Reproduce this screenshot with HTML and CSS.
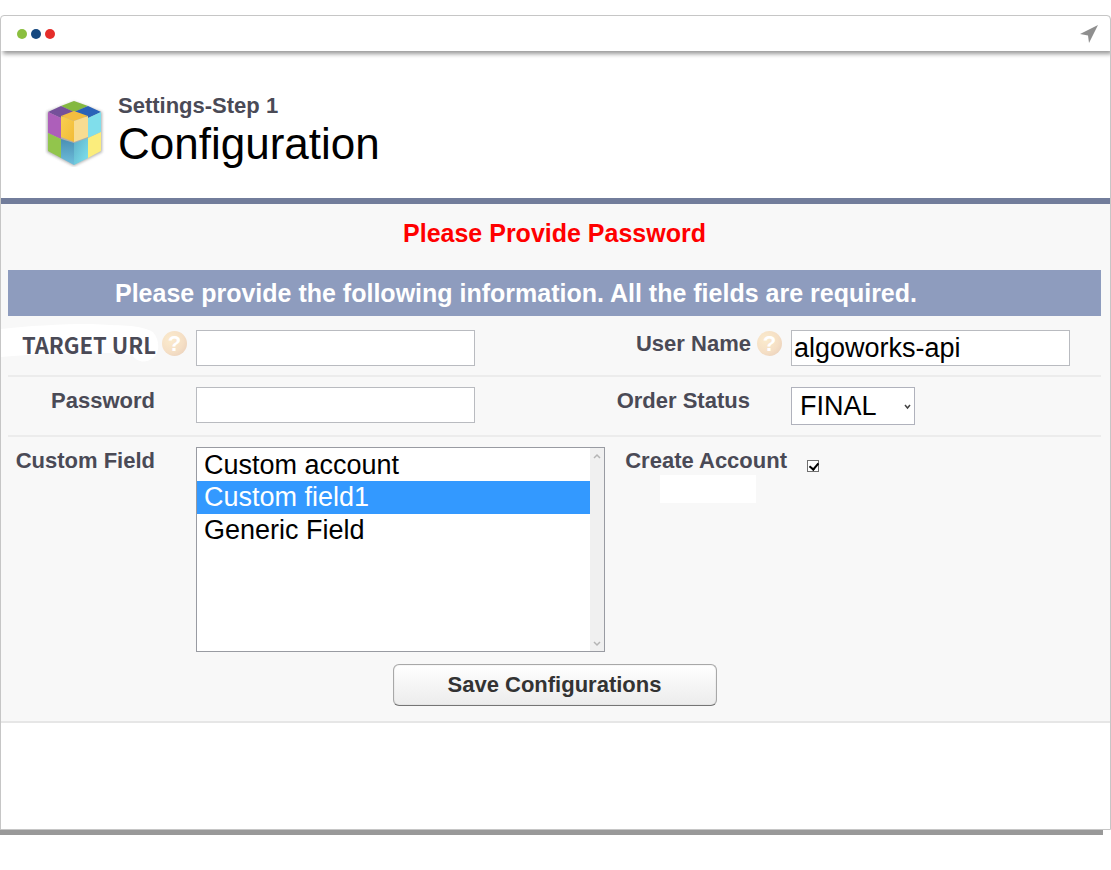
FILE: index.html
```
<!DOCTYPE html>
<html lang="en">
<head>
    <meta charset="UTF-8">
    <meta name="viewport" content="width=device-width, initial-scale=1.0">
    <title>Settings - Configuration</title>
    <link rel="stylesheet" href="styles.css">
</head>
<body>
    <div class="window">
        <div class="titlebar">
            <div class="dots">
                <span class="dot green"></span>
                <span class="dot blue"></span>
                <span class="dot red"></span>
            </div>
            <svg class="arrow" width="18" height="18" viewBox="0 0 18 18">
                <path d="M18 0L0 9l8 1.500L9 18z" fill="#8f8f8f"/>
            </svg>
        </div>

        <header class="header">
            <svg class="logo" width="60" height="68" viewBox="0 0 60 68">
                <defs>
                    <filter id="soft" x="-10%" y="-10%" width="120%" height="120%">
                        <feGaussianBlur stdDeviation="1.5"/>
                    </filter>
                    <linearGradient id="yellowLeft" x1="0" y1="0" x2="1" y2="1">
                        <stop offset="0" stop-color="#f8cf50"/>
                        <stop offset="1" stop-color="#f2bb38"/>
                    </linearGradient>
                    <linearGradient id="tealLeft" x1="0" y1="0" x2="0" y2="1">
                        <stop offset="0" stop-color="#4a8fb4"/>
                        <stop offset="1" stop-color="#6fbfdc"/>
                    </linearGradient>
                    <linearGradient id="tealRight" x1="0" y1="0" x2="1" y2="1">
                        <stop offset="0" stop-color="#5fb0c8"/>
                        <stop offset="1" stop-color="#80e4f0"/>
                    </linearGradient>
                </defs>
                <path d="M2 13L29 3l28 10v40L29 67 2 53z" fill="#777" opacity=".6" filter="url(#soft)"/>
                <path d="M29 2l14 5-14 6-13-6z" fill="#84b840"/>
                <path d="M16 7l13 6-13 6L3 13z" fill="#75509a"/>
                <path d="M43 7l13 6-13 6-14-6z" fill="#2a62b8"/>
                <path d="M3 13l13 6v21L3 34z" fill="#ad5fba"/>
                <path d="M56 13l-13 6v20l13-6z" fill="#80deeb"/>
                <path d="M3 34l13 6v19L3 52z" fill="#92c54c"/>
                <path d="M56 33l-13 6v20l13-7z" fill="#fbed7c"/>
                <path d="M16 40l13 4v22l-13-7z" fill="url(#tealLeft)"/>
                <path d="M43 39l-14 5v22l14-7z" fill="url(#tealRight)"/>
                <path d="M16 17l13-5 14 5-14 5z" fill="#f3bd40"/>
                <path d="M16 17l13 5v21l-13-5z" fill="url(#yellowLeft)"/>
                <path d="M43 17l-14 5v21l14-5z" fill="#f8dc91"/>
            </svg>
            <div>
                <div class="step">Settings-Step 1</div>
                <h1>Configuration</h1>
            </div>
        </header>

        <form class="settings">
            <p class="error">Please Provide Password</p>
            <h2 class="banner">Please provide the following information. All the fields are required.</h2>

            <div class="row">
                <div class="label">
                    <svg class="smudge" width="160" height="42" viewBox="0 0 160 42">
                        <path d="M0 7C25 4 60 2 90 2c28 2 48 0 62 8 7 8 7 21 0 26-8 6-16 4-21-3-30-4-80-2-131 2z" fill="#fff"/>
                    </svg>
                    <label class="target" for="targetUrl">TARGET URL</label>
                    <span class="help">?</span>
                </div>
                <div class="field"><input class="textbox" type="text" id="targetUrl"></div>
                <div class="label">
                    <label for="userName">User Name</label>
                    <span class="help">?</span>
                </div>
                <div class="field"><input class="textbox" type="text" id="userName" value="algoworks-api"></div>
            </div>

            <div class="row">
                <div class="label plain"><label for="password">Password</label></div>
                <div class="field"><input class="textbox" type="password" id="password"></div>
                <div class="label plain"><label for="orderStatus">Order Status</label></div>
                <div class="field">
                    <div class="dropdown">
                        <select class="status" id="orderStatus">
                            <option selected>FINAL</option>
                        </select>
                        <svg class="caret" width="7" height="6" viewBox="0 0 7 6">
                            <path d="M1 1l2.500 3L6 1" fill="none" stroke="#444" stroke-width="1.500"/>
                        </svg>
                    </div>
                </div>
            </div>

            <div class="row">
                <div class="label plain"><label for="customField">Custom Field</label></div>
                <div class="field">
                    <div class="listbox">
                        <select class="list" id="customField" size="6">
                            <option>Custom account</option>
                            <option selected>Custom field1</option>
                            <option>Generic Field</option>
                        </select>
                        <div class="scrollbar">
                            <svg width="8" height="6" viewBox="0 0 8 6"><path d="M1 5l3-3 3 3" fill="none" stroke="#b5b5b5" stroke-width="1.500"/></svg>
                            <svg width="8" height="6" viewBox="0 0 8 6"><path d="M1 1l3 3 3-3" fill="none" stroke="#b5b5b5" stroke-width="1.500"/></svg>
                        </div>
                    </div>
                </div>
                <div class="label wide">
                    <span class="patch"></span>
                    <label for="createAccount">Create Account</label>
                </div>
                <div class="field"><input class="check" type="checkbox" id="createAccount" checked></div>
            </div>

            <div class="actions">
                <button class="save" type="button">Save Configurations</button>
            </div>
        </form>
    </div>
</body>
</html>
```
FILE: styles.css
```
/* General Styles */
* {
    box-sizing: border-box;
}

body {
    min-height: 100vh;
    margin: 0;
    padding-top: 15px;
    font-family: "Liberation Sans", Arial, sans-serif;
    background-color: #fff;
    color: #000;
}

.window {
    padding-bottom: 106px;
    border: 1px solid #c6c6c6;
    border-radius: 4px 4px 0 0;
    box-shadow: -8px 5px 0 #999;
    background-color: #fff;
}

/* Title bar */
.titlebar {
    display: flex;
    justify-content: space-between;
    align-items: center;
    height: 35px;
    padding: 0 12px 0 16px;
    border-radius: 4px 4px 0 0;
    box-shadow: 2px 3px 4px rgba(0, 0, 0, 0.4);
    clip-path: inset(0 0 -10px 0);
}

.dots {
    display: flex;
    gap: 4px;
}

.dot {
    width: 10px;
    height: 10px;
    border-radius: 50%;
}

.green {
    background-color: #8bbf3f;
}

.blue {
    background-color: #14477f;
}

.red {
    background-color: #e52d2a;
}

/* Header */
.header {
    display: flex;
    align-items: center;
    gap: 13px;
    height: 153px;
    padding: 12px 0 0 44px;
    border-bottom: 6px solid #727d9b;
}

.logo {
    margin-top: 4px;
}

.step {
    font-size: 22px;
    line-height: 26px;
    font-weight: bold;
    color: #4a4a56;
}

h1 {
    margin: 0;
    font-size: 44px;
    line-height: 50px;
    font-weight: normal;
}

/* Form */
.settings {
    padding: 0 9px 15px 7px;
    border-bottom: 2px solid #e6e6e6;
    background-color: #f8f8f8;
}

.error {
    margin: 0;
    padding: 14px 0 22px;
    font-size: 25px;
    line-height: 30px;
    font-weight: bold;
    text-align: center;
    color: #f00;
}

.banner {
    margin: 0 0 1px;
    padding: 0 107px;
    font-size: 25px;
    line-height: 46px;
    font-weight: bold;
    color: #fff;
    background-color: #8e9cbe;
}

.row {
    display: grid;
    grid-template-columns: 188px 21fr 188px 16fr;
    min-height: 60px;
    border-bottom: 2px solid #ececec;
}

.row:nth-of-type(3) {
    border-bottom: none;
}

.label {
    position: relative;
    display: flex;
    justify-content: flex-end;
    align-items: flex-start;
    gap: 6px;
    padding: 14px 9px 0 0;
    font-size: 22px;
    line-height: 26px;
    font-weight: bold;
    color: #4a4a56;
    white-space: nowrap;
}

.label label {
    position: relative;
}

.plain {
    padding: 11px 41px 0 0;
}

.wide {
    padding: 11px 6px 0 0;
}

.target {
    font-family: "Noto Sans CJK SC", "Noto Sans", sans-serif;
}

.smudge {
    position: absolute;
    top: 5px;
    left: -7px;
}

.patch {
    position: absolute;
    top: 38px;
    left: 55px;
    width: 96px;
    height: 28px;
    background-color: #fff;
}

.help {
    width: 25px;
    height: 25px;
    border-radius: 50%;
    font-size: 22px;
    line-height: 25px;
    text-align: center;
    color: #fff;
    background: radial-gradient(circle at 35% 35%, #fbebcd, #f5dfc5 55%, #e6cbb8);
}

.field {
    padding-top: 13px;
}

.plain + .field,
.wide + .field {
    padding-top: 10px;
}

.textbox {
    display: block;
    width: 279px;
    height: 36px;
    padding: 0 2px;
    border: 1px solid #b9bbc0;
    font-family: inherit;
    font-size: 27px;
    background-color: #fff;
    color: #000;
}

.dropdown {
    position: relative;
    width: 124px;
}

.status {
    appearance: none;
    display: block;
    width: 100%;
    height: 38px;
    padding: 0 8px;
    border: 1px solid #b0b2bc;
    border-radius: 0;
    font-family: inherit;
    font-size: 27px;
    background-color: #fff;
    color: #000;
}

.caret {
    position: absolute;
    top: 17px;
    right: 4px;
}

.listbox {
    position: relative;
    width: 409px;
    height: 205px;
}

.list {
    display: block;
    width: 100%;
    height: 100%;
    padding: 1px 14px 0 0;
    border: 1px solid #999ba2;
    border-radius: 0;
    font-family: inherit;
    font-size: 27px;
    background-color: #fff;
    color: #000;
    outline: none;
    scrollbar-width: none;
}

.list option {
    padding: 1px 7px 0;
}

.list option:checked {
    background: linear-gradient(#39f, #39f);
    color: #fff;
    -webkit-text-fill-color: #fff;
}

.scrollbar {
    position: absolute;
    top: 1px;
    right: 1px;
    bottom: 1px;
    display: flex;
    flex-direction: column;
    justify-content: space-between;
    align-items: center;
    width: 14px;
    padding: 5px 0 4px;
    background-color: #f0f0f0;
}

.check {
    appearance: none;
    display: block;
    width: 12px;
    height: 12px;
    margin: 13px 0 0 14px;
    border: 1px solid #707070;
    background-color: #fff;
}

.check:checked::before {
    content: "";
    display: block;
    width: 4px;
    height: 7px;
    margin: 0 0 0 3px;
    border: solid #000;
    border-width: 0 2px 2px 0;
    transform: rotate(40deg);
}

.actions {
    display: flex;
    justify-content: center;
    padding-top: 12px;
}

.save {
    width: 324px;
    height: 42px;
    border: 1px solid #a8a8a8;
    border-bottom-color: #757575;
    border-radius: 6px;
    box-shadow: inset 0 0 1px #aaa;
    font-family: inherit;
    font-size: 22px;
    font-weight: bold;
    color: #333;
    background: linear-gradient(#fff, #ececec);
    cursor: pointer;
}
```
